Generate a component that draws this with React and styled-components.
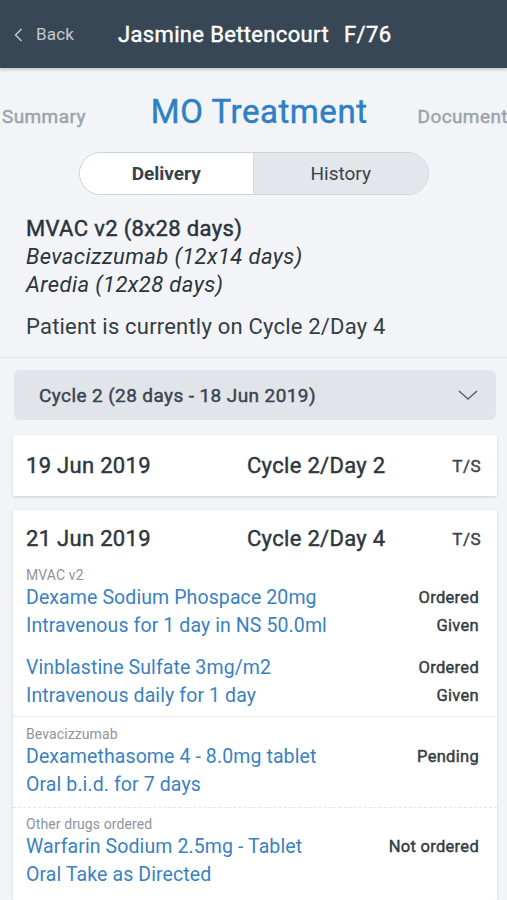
import React from "react";
import styled, { createGlobalStyle, css } from "styled-components";

const Global = createGlobalStyle`
  html, body { margin: 0; padding: 0; }
  body {
    background: #f2f4f7;
    font-family: Roboto, "Liberation Sans", sans-serif;
    color: #2e3842;
    overflow: hidden;
  }
`;

// Roboto medium isn't installed, so fake it with a thin stroke over regular
const medium = css`
  font-weight: 400;
  -webkit-text-stroke: 0.45px currentColor;
`;

const Page = styled.div`
  width: 507px;
  height: 900px;
  overflow: hidden;
  background: #f2f4f7;
`;

const Header = styled.header`
  height: 68px;
  background: #374756;
  display: flex;
  align-items: center;
  box-shadow: 0 2px 3px rgba(0, 0, 0, 0.18);
  position: relative;
  z-index: 1;
`;

const Back = styled.div`
  display: flex;
  align-items: center;
  gap: 13px;
  padding-left: 14px;
  width: 104px;
  color: #c3c9cf;
  font-size: 17px;
  letter-spacing: 0.2px;
  svg { margin-top: 1px; }
`;

const Title = styled.div`
  ${medium};
  color: #fff;
  font-size: 22px;
  letter-spacing: 0.35px;
  display: flex;
  gap: 15px;
`;

const Tabs = styled.nav`
  display: flex;
  align-items: baseline;
  height: 82px;
  padding-top: 24px;
  box-sizing: border-box;
  white-space: nowrap;
  overflow: hidden;
`;

const Tab = styled.div`
  ${medium};
  flex: none;
  font-size: ${p => (p.$active ? "33px" : "19px")};
  letter-spacing: ${p => (p.$active ? "0.55px" : "0.4px")};
  color: ${p => (p.$active ? "#2e7fc4" : "#9aa2aa")};
  margin-left: ${p => p.$ml}px;
`;

const Segment = styled.div`
  margin: 2px auto 0;
  width: 350px;
  height: 43px;
  box-sizing: border-box;
  border: 1px solid #cdd2d7;
  border-radius: 22px;
  overflow: hidden;
  display: flex;
`;

const SegButton = styled.div`
  flex: 1;
  display: flex;
  align-items: center;
  justify-content: center;
  font-size: 19px;
  font-weight: ${p => (p.$active ? 700 : 400)};
  background: ${p => (p.$active ? "#ffffff" : "#e3e7eb")};
  color: #38424c;
  & + & { border-left: 1px solid #d6dade; }
`;

const Plan = styled.div`
  padding: 20px 26px 17px 26px;
  border-bottom: 1px solid #e1e4e8;
`;

const PlanLine = styled.div`
  ${p => (p.$italic ? "font-weight: 400;" : medium)};
  font-size: 22px;
  line-height: 28px;
  letter-spacing: ${p => (p.$italic ? "0.4px" : "0.35px")};
  font-style: ${p => (p.$italic ? "italic" : "normal")};
  color: #2b333c;
`;

const Current = styled.div`
  margin-top: 15px;
  font-size: 22px;
  line-height: 26px;
  letter-spacing: 0.2px;
  color: #343d46;
`;

const Body = styled.div`
  padding: 12px 10px 0 13px;
  display: flex;
  flex-direction: column;
  gap: 14px;
`;

const Dropdown = styled.div`
  ${medium};
  margin: 0 1px 1px;
  height: 50px;
  background: #e1e5ea;
  border-radius: 6px;
  display: flex;
  align-items: center;
  justify-content: space-between;
  padding: 0 18px 0 25px;
  font-size: 19px;
  letter-spacing: 0.4px;
  color: #3a444e;
  svg { -webkit-text-stroke: 0; }
`;

const Card = styled.div`
  background: #fff;
  border-radius: 2px;
  box-shadow: 0 1px 3px rgba(0, 0, 0, 0.16);
`;

const CardHead = styled.div`
  ${medium};
  height: ${p => p.$h}px;
  display: grid;
  grid-template-columns: 221px 1fr auto;
  align-items: center;
  padding: 0 16px 0 13px;
  font-size: 22px;
  letter-spacing: 0.3px;
  color: #2e3740;
`;

const Ts = styled.span`
  font-size: 17px;
  letter-spacing: 0.5px;
  color: #3b444d;
`;

const Section = styled.div`
  padding: ${p => p.$pad};
  border-bottom: ${p =>
    p.$border === "dashed" ? "1px dashed #e3e6e9" : p.$border ? "1px solid #e6e8eb" : "none"};
`;

const Label = styled.div`
  font-size: 14px;
  line-height: 16px;
  letter-spacing: 0.1px;
  color: #8d949b;
`;

const Drug = styled.div`
  & + & { margin-top: 14px; }
`;

const Line = styled.div`
  display: flex;
  justify-content: space-between;
  align-items: center;
  height: 28px;
`;

const Name = styled.span`
  font-size: 19.5px;
  letter-spacing: 0.1px;
  color: #3a81c2;
`;

const Status = styled.span`
  ${medium};
  font-size: 16.5px;
  letter-spacing: 0.3px;
  color: #343c44;
`;

const sections = [
  {
    label: "MVAC v2",
    pad: "0 18px 7px 13px",
    border: "solid",
    drugs: [
      [["Dexame Sodium Phospace 20mg", "Ordered"], ["Intravenous for 1 day in NS 50.0ml", "Given"]],
      [["Vinblastine Sulfate 3mg/m2", "Ordered"], ["Intravenous daily for 1 day", "Given"]],
    ],
  },
  {
    label: "Bevacizzumab",
    pad: "9px 18px 9px 13px",
    border: "dashed",
    drugs: [[["Dexamethasome 4 - 8.0mg tablet", "Pending"], ["Oral b.i.d. for 7 days", ""]]],
  },
  {
    label: "Other drugs ordered",
    pad: "8px 18px 12px 13px",
    border: null,
    drugs: [[["Warfarin Sodium 2.5mg - Tablet", "Not ordered"], ["Oral Take as Directed", ""]]],
  },
];

export default function App() {
  return (
    <Page>
      <Global />
      <Header>
        <Back>
          <svg width="9" height="14" viewBox="0 0 9 14">
            <polyline points="7.5,1 1.5,7 7.5,13" fill="none" stroke="#c3c9cf" strokeWidth="1.5" />
          </svg>
          Back
        </Back>
        <Title>
          <span>Jasmine Bettencourt</span>
          <span>F/76</span>
        </Title>
      </Header>

      <Tabs>
        <Tab $ml={2}>Summary</Tab>
        <Tab $active $ml={65}>MO Treatment</Tab>
        <Tab $ml={50}>Document</Tab>
      </Tabs>

      <Segment>
        <SegButton $active>Delivery</SegButton>
        <SegButton>History</SegButton>
      </Segment>

      <Plan>
        <PlanLine>MVAC v2 (8x28 days)</PlanLine>
        <PlanLine $italic>Bevacizzumab (12x14 days)</PlanLine>
        <PlanLine $italic>Aredia (12x28 days)</PlanLine>
        <Current>Patient is currently on Cycle 2/Day 4</Current>
      </Plan>

      <Body>
        <Dropdown>
          <span>Cycle 2 (28 days - 18 Jun 2019)</span>
          <svg width="20" height="12" viewBox="0 0 20 12">
            <polyline points="1,2 10,10 19,2" fill="none" stroke="#59636d" strokeWidth="1.6" />
          </svg>
        </Dropdown>

        <Card>
          <CardHead $h={61}>
            <span>19 Jun 2019</span>
            <span>Cycle 2/Day 2</span>
            <Ts>T/S</Ts>
          </CardHead>
        </Card>

        <Card>
          <CardHead $h={57}>
            <span>21 Jun 2019</span>
            <span>Cycle 2/Day 4</span>
            <Ts>T/S</Ts>
          </CardHead>
          {sections.map(s => (
            <Section key={s.label} $pad={s.pad} $border={s.border}>
              <Label>{s.label}</Label>
              {s.drugs.map((d, i) => (
                <Drug key={i}>
                  {d.map(([name, status]) => (
                    <Line key={name}>
                      <Name>{name}</Name>
                      <Status>{status}</Status>
                    </Line>
                  ))}
                </Drug>
              ))}
            </Section>
          ))}
        </Card>
      </Body>
    </Page>
  );
}
